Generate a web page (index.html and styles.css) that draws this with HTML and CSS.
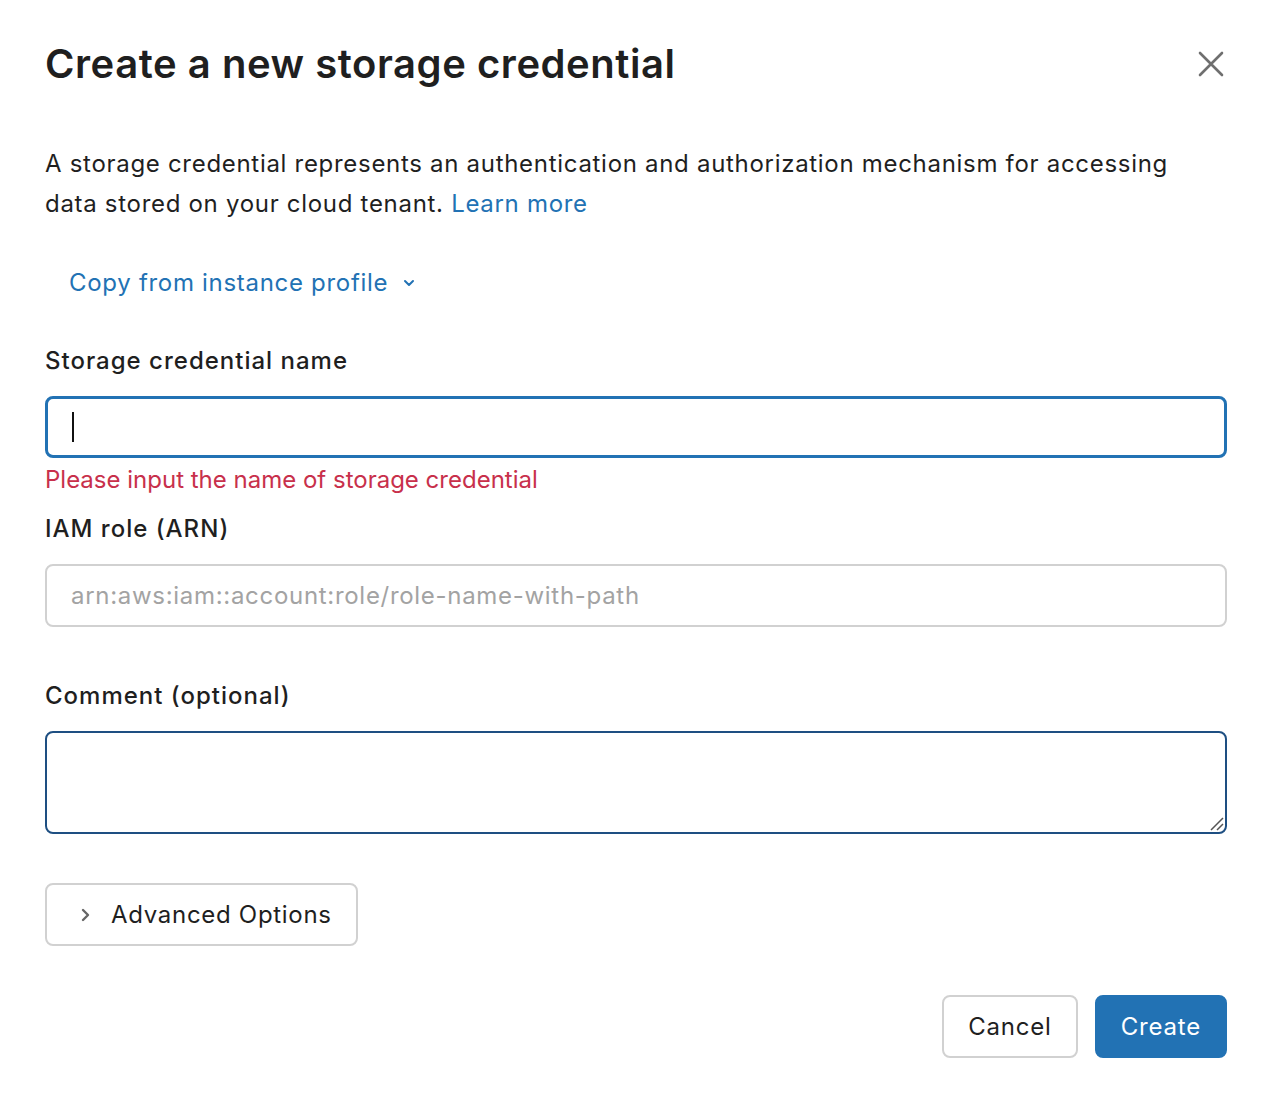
FILE: index.html
```html
<!DOCTYPE html>
<html>
<head>
  <title>Create a new storage credential</title>
  <link rel="stylesheet" href="styles.css">
</head>
<body>
  <div class="modal">
    <div class="header">
      <h1>Create a new storage credential</h1>
      <button class="close" aria-label="Close">
        <svg width="26" height="26" viewBox="0 0 26 26"><path d="M2 2L24 24M24 2L2 24" stroke="#6f6f6f" stroke-width="2.6" stroke-linecap="round"/></svg>
      </button>
    </div>

    <p class="intro">A storage credential represents an authentication and authorization mechanism for accessing data stored on your cloud tenant. <a href="#">Learn more</a></p>

    <button class="copy">Copy from instance profile
      <svg width="14" height="10" viewBox="0 0 14 10"><path d="M3 3L7 7L11 3" fill="none" stroke="#2272b4" stroke-width="2" stroke-linecap="round" stroke-linejoin="round"/></svg>
    </button>

    <div class="field">
      <label>Storage credential name</label>
      <div class="input focused"><span class="caret"></span></div>
      <div class="error">Please input the name of storage credential</div>
    </div>

    <div class="field">
      <label>IAM role (ARN)</label>
      <div class="input"><span class="placeholder">arn:aws:iam::account:role/role-name-with-path</span></div>
    </div>

    <div class="field comment">
      <label>Comment (optional)</label>
      <div class="textarea">
        <svg class="grip" width="16" height="16" viewBox="0 0 16 16"><path d="M15 3L3 15M15 9L9 15" stroke="#555" stroke-width="1.5"/></svg>
      </div>
    </div>

    <button class="advanced">
      <svg width="14" height="16" viewBox="0 0 14 16"><path d="M4 3L9 8L4 13" fill="none" stroke="#666" stroke-width="2.4" stroke-linecap="round" stroke-linejoin="round"/></svg>
      Advanced Options
    </button>

    <div class="footer">
      <button class="btn">Cancel</button>
      <button class="btn primary">Create</button>
    </div>
  </div>
</body>
</html>
```
FILE: styles.css
```css
body {
  margin: 0;
  background: #fff;
  font-family: Inter, "Noto Sans", sans-serif;
  color: #1f1f1f;
  letter-spacing: 0.7px;
}
.modal {
  padding: 34px 41px 40px 45px;
}
.header {
  display: flex;
  justify-content: space-between;
  align-items: center;
}
h1 {
  margin: 0;
  font-size: 40px;
  font-weight: 600;
  line-height: 60px;
  color: #1f1f1f;
  letter-spacing: 0.55px;
}
.close {
  background: none;
  border: none;
  padding: 0;
  margin-right: 3px;
  cursor: pointer;
  display: flex;
}
.intro {
  margin: 50px 0 0;
  font-size: 24px;
  line-height: 40px;
  color: #1f1f1f;
}
.intro a {
  color: #2272b4;
  text-decoration: none;
}
.copy {
  margin: 41px 0 0 24px;
  padding: 0;
  background: none;
  border: none;
  font-family: inherit;
  font-size: 24px;
  letter-spacing: 0.7px;
  color: #2272b4;
  display: flex;
  align-items: center;
  gap: 14px;
  cursor: pointer;
  line-height: 36px;
}
.field {
  margin-top: 42px;
}
.field + .field {
  margin-top: 13px;
}
.field.comment {
  margin-top: 51px;
}
label {
  display: block;
  font-size: 24px;
  font-weight: 500;
  line-height: 36px;
  letter-spacing: 1px;
  color: #1f1f1f;
  margin-bottom: 17px;
}
.input {
  height: 63px;
  box-sizing: border-box;
  border: 2px solid #d1d1d1;
  border-radius: 8px;
  display: flex;
  align-items: center;
  padding: 0 24px;
}
.input.focused {
  border: 3px solid #2272b4;
  height: 62px;
}
.caret {
  width: 2px;
  height: 30px;
  background: #111;
}
.placeholder {
  font-size: 24px;
  color: #a3a3a3;
}
.error {
  font-size: 24px;
  line-height: 36px;
  letter-spacing: 0;
  color: #c8304b;
  margin-top: 4px;
}
.textarea {
  height: 103px;
  box-sizing: border-box;
  border: 2px solid #1e4f82;
  border-radius: 8px;
  position: relative;
}
.grip {
  position: absolute;
  right: 1px;
  bottom: 1px;
}
.advanced {
  margin-top: 49px;
  height: 63px;
  padding: 0 24px 0 32px;
  background: #fff;
  border: 2px solid #d1d1d1;
  border-radius: 8px;
  font-family: inherit;
  font-size: 24px;
  letter-spacing: 0.7px;
  color: #1f1f1f;
  display: flex;
  align-items: center;
  gap: 18px;
  cursor: pointer;
}
.footer {
  margin-top: 49px;
  display: flex;
  justify-content: flex-end;
  gap: 17px;
}
.btn {
  height: 63px;
  padding: 0 24px;
  border: 2px solid #d1d1d1;
  border-radius: 8px;
  background: #fff;
  font-family: inherit;
  font-size: 24px;
  letter-spacing: 0.8px;
  color: #1f1f1f;
  cursor: pointer;
}
.btn.primary {
  background: #2272b4;
  border-color: #2272b4;
  color: #fff;
  padding: 0 24px;
}
```
